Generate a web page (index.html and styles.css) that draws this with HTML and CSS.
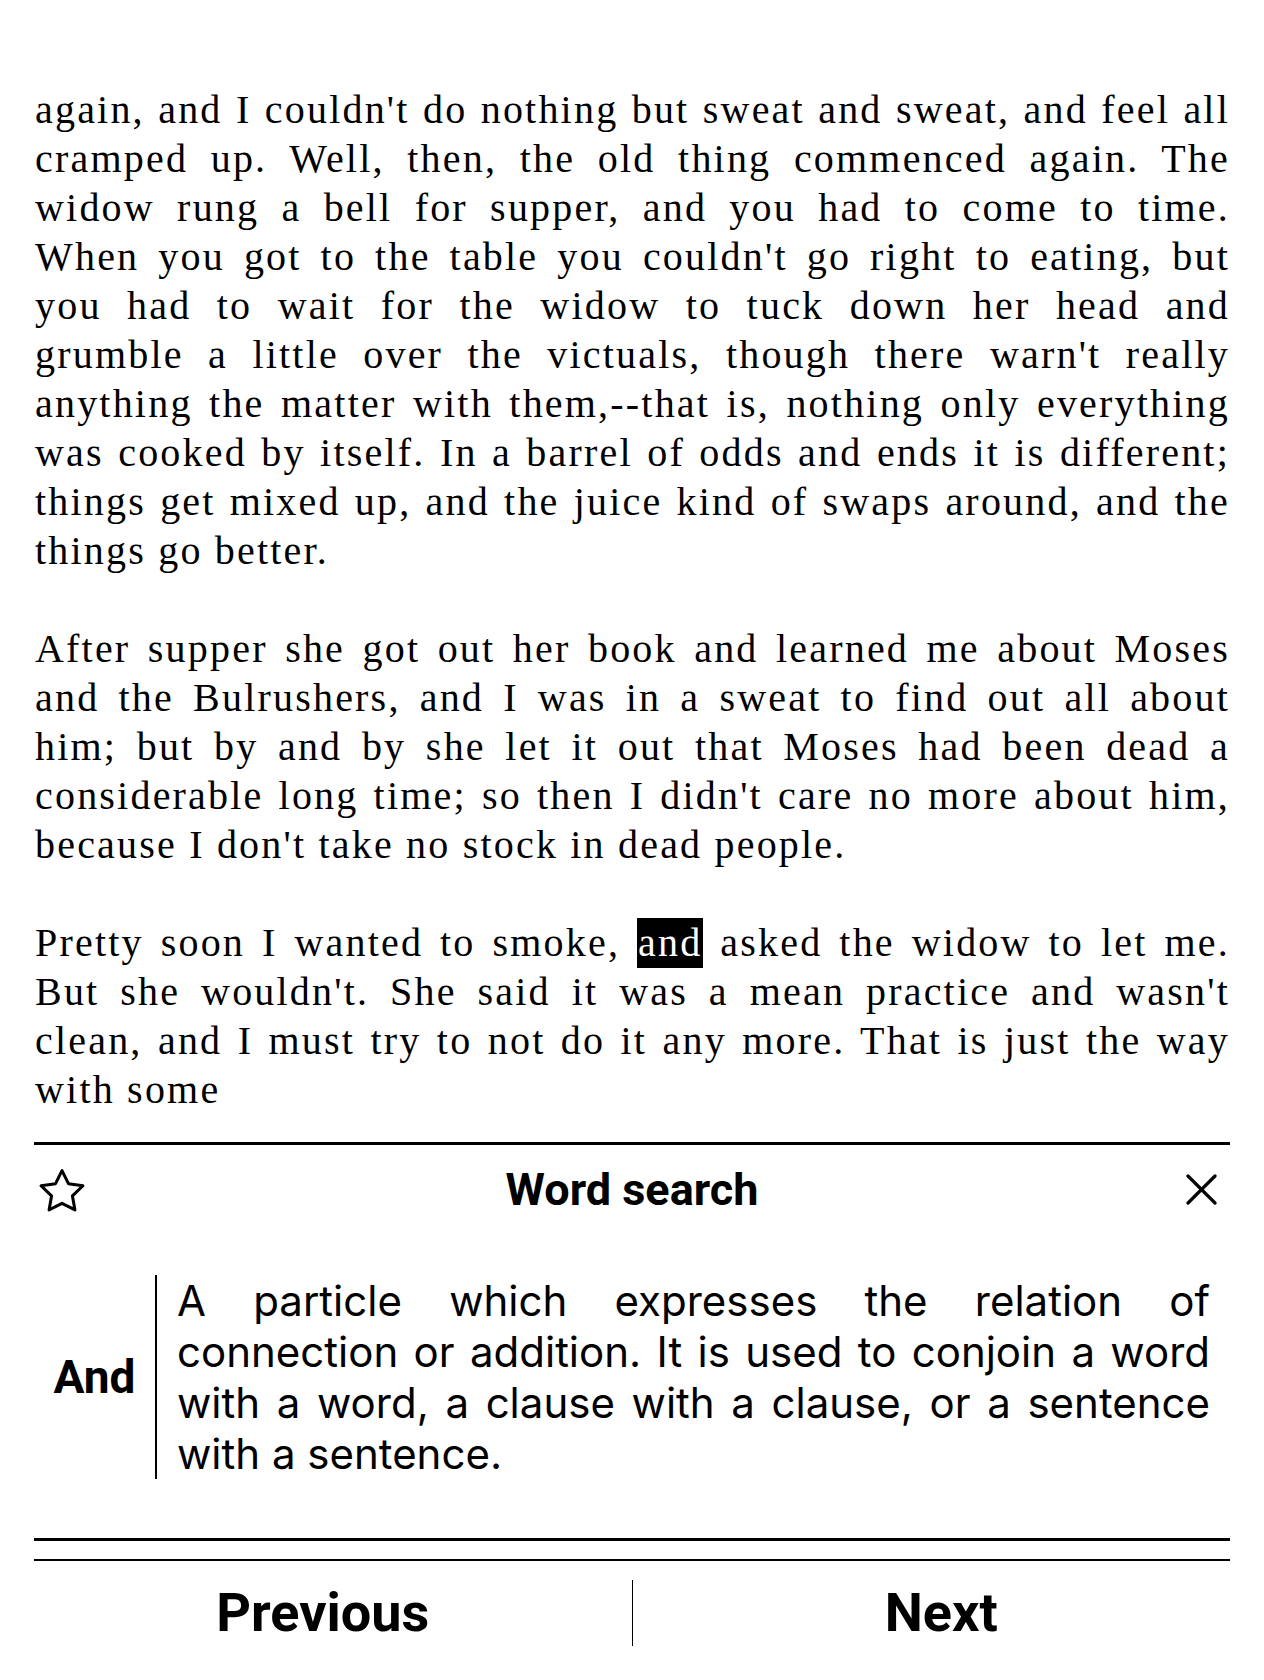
FILE: index.html
```html
<!DOCTYPE html>
<html lang="en">
<head>
<meta charset="utf-8">
<title>Reader – Word search</title>
<link rel="stylesheet" href="styles.css">
</head>
<body>
<main class="reader">
  <article class="page-text">
    <p class="para">
      <span class="ln">again, and I couldn't do nothing but sweat and sweat, and feel all</span>
      <span class="ln">cramped up. Well, then, the old thing commenced again. The</span>
      <span class="ln">widow rung a bell for supper, and you had to come to time.</span>
      <span class="ln">When you got to the table you couldn't go right to eating, but</span>
      <span class="ln">you had to wait for the widow to tuck down her head and</span>
      <span class="ln">grumble a little over the victuals, though there warn't really</span>
      <span class="ln">anything the matter with them,--that is, nothing only everything</span>
      <span class="ln">was cooked by itself. In a barrel of odds and ends it is different;</span>
      <span class="ln">things get mixed up, and the juice kind of swaps around, and the</span>
      <span class="ln last">things go better.</span>
    </p>
    <p class="para">
      <span class="ln">After supper she got out her book and learned me about Moses</span>
      <span class="ln">and the Bulrushers, and I was in a sweat to find out all about</span>
      <span class="ln">him; but by and by she let it out that Moses had been dead a</span>
      <span class="ln">considerable long time; so then I didn't care no more about him,</span>
      <span class="ln last">because I don't take no stock in dead people.</span>
    </p>
    <p class="para">
      <span class="ln">Pretty soon I wanted to smoke, <mark class="hl">and</mark> asked the widow to let me.</span>
      <span class="ln">But she wouldn't. She said it was a mean practice and wasn't</span>
      <span class="ln">clean, and I must try to not do it any more. That is just the way</span>
      <span class="ln last">with some</span>
    </p>
  </article>

  <section class="lookup">
    <header class="lookup-head">
      <button class="icon-btn star-btn" aria-label="Bookmark">
        <svg width="46" height="44" viewBox="1 1 22 21" fill="none" stroke="#000" stroke-width="1.45" stroke-linejoin="round" stroke-linecap="round">
          <polygon points="12 2.2 15.09 8.46 22 9.47 17 14.34 18.18 21.02 12 17.87 5.82 21.02 7 14.34 2 9.47 8.91 8.46"/>
        </svg>
      </button>
      <h1 class="lookup-title">Word search</h1>
      <button class="icon-btn close-btn" aria-label="Close">
        <svg width="31" height="31" viewBox="0 0 31 31" fill="none" stroke="#000" stroke-width="3.2" stroke-linecap="round">
          <line x1="2" y1="2" x2="29" y2="29"/>
          <line x1="29" y1="2" x2="2" y2="29"/>
        </svg>
      </button>
    </header>
    <div class="entry">
      <div class="headword">And</div>
      <div class="definition">
        <span class="ln">A particle which expresses the relation of</span>
        <span class="ln">connection or addition. It is used to conjoin a word</span>
        <span class="ln">with a word, a clause with a clause, or a sentence</span>
        <span class="ln last">with a sentence.</span>
      </div>
    </div>
  </section>

  <nav class="pager">
    <div class="pager-buttons">
      <button class="pager-btn">Previous</button>
      <button class="pager-btn pager-next">Next</button>
    </div>
  </nav>
</main>
</body>
</html>
```

FILE: styles.css
```css
* {
  box-sizing: border-box;
}

html, body {
  margin: 0;
  padding: 0;
  background: #ffffff;
  color: #000000;
}

.reader {
  padding: 85px 34px 0 34px;
}

/* ---------- book text ---------- */
.page-text {
  font-family: "Liberation Serif", "Times New Roman", serif;
  font-size: 40px;
  letter-spacing: 2.2px;
  line-height: 49px;
  padding-left: 1px;
}

.para {
  margin: 0 0 49px 0;
}

.para:last-child {
  margin-bottom: 0;
}

.ln {
  display: block;
  text-align: justify;
  text-align-last: justify;
}

.ln.last {
  text-align-last: left;
}

.hl {
  background: #000000;
  color: #ffffff;
  padding: 2px 1px 3px 1px;
}

/* ---------- lookup panel ---------- */
.lookup {
  margin-top: 28px;
  border-top: 3px solid #000000;
  border-bottom: 3px solid #000000;
  padding-bottom: 59px;
}

.lookup-head {
  height: 89px;
  display: grid;
  grid-template-columns: 1fr auto 1fr;
  align-items: center;
}

.icon-btn {
  background: none;
  border: 0;
  padding: 0;
  margin: 0;
  display: flex;
  align-items: center;
  justify-content: center;
}

.star-btn {
  justify-self: start;
  margin-left: 5px;
}

.close-btn {
  justify-self: end;
  margin-right: 13px;
}

.lookup-title {
  margin: 0;
  font-family: Roboto, "Liberation Sans", sans-serif;
  font-weight: 700;
  font-size: 45px;
  line-height: 53px;
  text-align: center;
}

.entry {
  margin-top: 41px;
  display: flex;
  align-items: center;
}

.headword {
  width: 121px;
  flex: none;
  text-align: center;
  font-family: Roboto, "Liberation Sans", sans-serif;
  font-weight: 700;
  font-size: 46px;
  line-height: 54px;
}

.definition {
  flex: 1;
  border-left: 2px solid #000000;
  padding: 0 20px 0 20px;
  font-family: Inter, "Noto Sans", sans-serif;
  font-size: 42px;
  line-height: 51px;
}

/* ---------- pager ---------- */
.pager {
  margin-top: 18px;
  border-top: 2px solid #000000;
  padding-top: 19px;
}

.pager-buttons {
  display: flex;
  margin: 0 -20px;
}

.pager-btn {
  flex: 1;
  background: none;
  border: 0;
  padding: 0;
  margin: 0;
  height: 66px;
  font-family: Roboto, "Liberation Sans", sans-serif;
  font-weight: 700;
  font-size: 54px;
  line-height: 66px;
  color: #000000;
  text-align: center;
}

.pager-next {
  border-left: 1px solid #000000;
}
```
